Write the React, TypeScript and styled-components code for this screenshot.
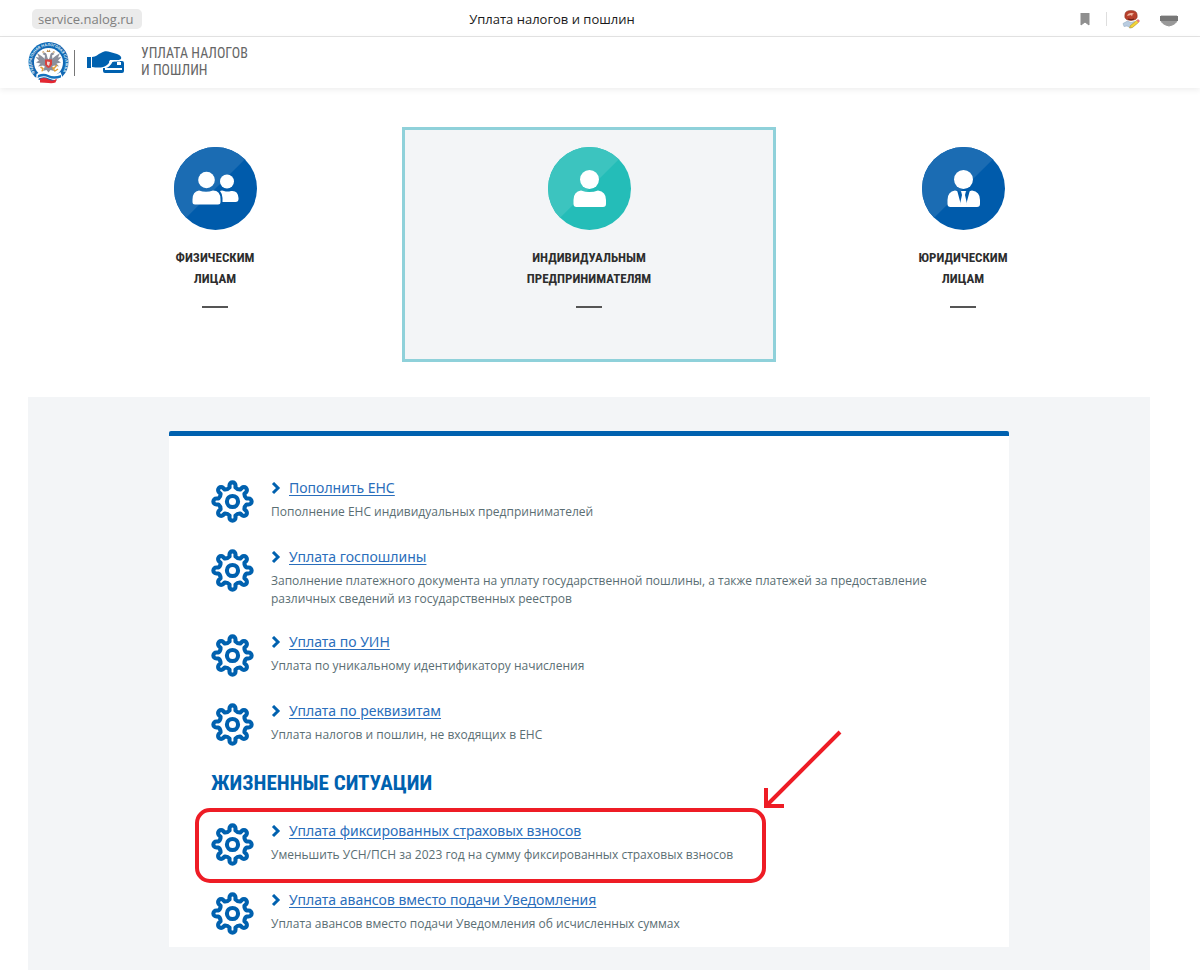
import React from 'react';
import styled, { createGlobalStyle } from 'styled-components';

const BLUE = '#0061af';
const CONDENSED = '"Roboto Condensed", "Open Sans Condensed", sans-serif';

const GlobalStyle = createGlobalStyle`
  *, *::before, *::after { box-sizing: border-box; }
  body {
    margin: 0;
    background: #fff;
    color: #333;
    font-family: "Open Sans", "Noto Sans", sans-serif;
    font-size: 12px;
    line-height: 18px;
  }
  h1, h2, p, ul { margin: 0; padding: 0; }
  ul { list-style: none; }
  svg { display: block; flex: none; }
`;

const BrowserBar = styled.div`
  display: grid;
  grid-template-columns: 1fr auto 1fr;
  align-items: center;
  height: 37px;
  padding: 2px 22px 0 32px;
  border-bottom: 1px solid #e4e4e4;
  font-size: 13px;
`;

const Address = styled.div`
  justify-self: start;
  padding: 0 8px 0 6px;
  border-radius: 5px;
  background: #ebebeb;
  color: #808080;
  line-height: 20px;
`;

const PageTitle = styled.div`
  padding-right: 106px;
  color: #1a1a1a;
`;

const BarTools = styled.div`
  display: flex;
  justify-content: flex-end;
  align-items: center;
`;

const ToolButton = styled.button<{ $gap?: number }>`
  margin: 0 0 0 ${p => p.$gap ?? 0}px;
  padding: 0;
  border: 0;
  background: none;
  cursor: pointer;
`;

const ToolDivider = styled.span`
  width: 1px;
  height: 14px;
  margin: 0 0 0 16px;
  background: #dedede;
`;

const SiteHeader = styled.header`
  display: flex;
  align-items: center;
  height: 51px;
  padding: 0 28px;
  box-shadow: 0 2px 6px rgba(0, 0, 0, 0.07);
`;

const HeaderDivider = styled.span`
  width: 1px;
  height: 26px;
  margin: 0 12px 0 5px;
  background: #777;
`;

const SiteName = styled.h1`
  margin-left: 16px;
  padding-bottom: 2px;
  color: #666;
  font: 400 14px/17px ${CONDENSED};
  text-transform: uppercase;
`;

const Main = styled.main`
  padding: 39px 50px 0 28px;
`;

const Audiences = styled.nav`
  display: grid;
  grid-template-columns: repeat(3, 1fr);
  margin-bottom: 35px;
`;

const AudienceTab = styled.a<{ $active?: boolean }>`
  display: flex;
  flex-direction: column;
  align-items: center;
  min-height: 235px;
  padding: 17px;
  border: 3px solid ${p => (p.$active ? '#8fd1da' : 'transparent')};
  background: ${p => (p.$active ? '#f3f5f7' : 'transparent')};
  color: #2d2d2d;
  font: 700 13px/21px ${CONDENSED};
  text-align: center;
  text-decoration: none;
  text-transform: uppercase;
`;

const AudienceName = styled.span`
  margin: 17px 0;
`;

const Dash = styled.span`
  width: 26px;
  height: 2px;
  background: #555;
`;

const Backdrop = styled.section`
  padding: 34px 141px 24px;
  background: #f3f5f7;
`;

const Card = styled.div`
  padding: 41px 42px 12px;
  border-top: 5px solid ${BLUE};
  border-radius: 2px 2px 0 0;
  background: #fff;
`;

const ServiceList = styled.ul`
  display: flex;
  flex-direction: column;
  gap: 23px;
`;

const ServiceItem = styled.li`
  position: relative;
  display: flex;
  gap: 17px;
`;

const GearBox = styled.div`
  padding-top: 3px;
`;

const ServiceLink = styled.a`
  display: flex;
  align-items: center;
  gap: 8px;
  margin-bottom: 4px;
  color: #2a6ebb;
  font: 400 14px/22px "Noto Sans", "Open Sans", sans-serif;
  text-decoration: none;

  span { text-decoration: underline; text-underline-offset: 2px; }
`;

const Description = styled.p`
  max-width: 680px;
  color: #5a6e73;
`;

const SectionTitle = styled.h2`
  margin: 23px 0;
  color: ${BLUE};
  font: 700 21px/28px ${CONDENSED};
  text-transform: uppercase;
`;

const Highlight = styled.div`
  position: absolute;
  top: -12px;
  left: -16px;
  width: 571px;
  height: 75px;
  border: 4px solid #ee1c25;
  border-radius: 15px;
  pointer-events: none;
`;

const Pointer = styled.svg`
  position: absolute;
  top: -92px;
  left: 549px;
  pointer-events: none;
`;

const Emblem = () => (
  <svg width="41" height="42" viewBox="0 0 82 84" aria-label="ФНС России" role="img">
    <defs>
      <path id="ring" d="M16 64A33.500 33.500 0 1 1 66 64" />
    </defs>
    <circle cx="41" cy="40" r="40" fill="#1268b3" />
    <text fill="#d9ebf8" fontSize="8" fontWeight="700" fontFamily="Roboto, sans-serif">
      <textPath href="#ring" startOffset="3">ФЕДЕРАЛЬНАЯ НАЛОГОВАЯ СЛУЖБА</textPath>
    </text>
    <circle cx="41" cy="41" r="29" fill="#fff" />
    <g fill="#8b8f9b">
      <path d="M39 52 30 47 20 49 25 43 16 41 22 37 15 30 22 31 18 22 27 28 33 33 36 38z" />
      <path d="M43 52 52 47 62 49 57 43 66 41 60 37 67 30 60 31 64 22 55 28 49 33 46 38z" />
      <path d="M29 24q5-5 8 0l2 8 2 3 2-3 2-8q3-5 8 0l-5 3 1 7-4 8H37l-4-8 1-7z" />
      <path d="M34 48h14l4 10-7-2-4 5-4-5-7 2z" />
    </g>
    <path d="M37 20l2-5 2 3 2-3 2 5zM28 21l2-3 4 3zM48 21l4-3 2 3z" fill="#b98b4d" />
    <path d="M34 35h14v10q-2 5-7 7-5-2-7-7z" fill="#d8413d" />
    <path d="M38 39l6 1-2 8-4-3z" fill="#f0d7d2" />
    <path d="M25 50l5 3-2 6M50 55l8-9M54 58l6-4M49 50l5 9" stroke="#e0a13a" strokeWidth="3" fill="none" />
    <path d="M17 64q11-9 24-2t24-2l5 13q-14 7-28 0t-26 4z" fill="#fff" />
    <path d="M20 66q11-5 21 0t25 0v5q-14 5-25 0t-22 1z" fill="#1672bd" />
    <path d="M24 74q8-4 17 1t17-2l-3 8q-6 2-14 1t-17-1z" fill="#e32832" />
  </svg>
);

const HandCard = () => (
  <svg width="38" height="24" viewBox="0 0 38 24" fill={BLUE} aria-hidden="true">
    <path d="M0 6h4v11H0z" />
    <path d="M5 6c4 0 6-3 9-4 3-2 6-2 9-1l7 2c3 1 5 3 4 5-1 1-3 1-5 1h-6c-1 1 0 3-3 5-4 3-8 3-15 2z" />
    <path fillRule="evenodd" d="M26 10h9q2 0 2 2v8q0 2-2 2H18q-2 0-2-2v-3h3q4-1 7-7zM18 17v2h17v-2zM30 11v3h4v-3z" />
    <path d="M22 11c4-1 8-1 11-1" stroke="#fff" fill="none" />
  </svg>
);

const Bookmark = () => (
  <svg width="10" height="13" viewBox="0 0 10 13"><path d="M1 0h8v12L5 9l-4 3z" fill="#8f8f8f" stroke="#8f8f8f" strokeLinejoin="round" /></svg>
);

const Mascot = () => (
  <svg width="18" height="19" viewBox="0 0 36 38">
    <path d="M2 27l9-5 7 3 7-2 2 6-9 7-8-4-6 1z" fill="#b9cce0" stroke="#8da5bd" />
    <path d="M6 8q1-7 12-7t12 7q2 8-3 11-9 4-18 0-5-3-3-11z" fill="#b8402c" stroke="#81301f" />
    <path d="M12 8q6-3 12-1l-3 2-1 4-2-3-8 2z" fill="#f0b6a0" />
    <path d="M12 18q6 3 12 0" stroke="#641c12" strokeWidth="2" fill="none" />
    <path d="M17 31l12-10 4 4-12 10-6 1z" fill="#f4d536" stroke="#a98920" />
    <path d="M29 21l3-3 4 4-3 3z" fill="#e97a78" />
  </svg>
);

const Shield = () => (
  <svg width="18" height="16" viewBox="0 0 18 16">
    <path d="M1 5h16v4q0 4-8 6-8-2-8-6z" fill="#999" stroke="#999" strokeLinejoin="round" />
    <path d="M0 5h18v5H0z" fill="#777" />
  </svg>
);

const Badge = ({ base, tint, children }: { base: string; tint: string; children: React.ReactNode }) => (
  <svg width="83" height="83" viewBox="0 0 83 83" aria-hidden="true">
    <circle cx="41.500" cy="41.500" r="41.500" fill={base} />
    <path d="M70.845 12.155A41.500 41.500 0 0 0 12.155 70.845z" fill={tint} />
    <g fill="#fff">{children}</g>
  </svg>
);

const People = () => (
  <Badge base="#005bab" tint="#1b6cb3">
    <circle cx="53" cy="34.500" r="7" />
    <path d="M46 44q2-1 4 0 3.500 1 7 0 7-1 7.500 7v1q0 3-3 3H48.500V51q0-4-2.500-7z" />
    <circle cx="32.500" cy="33" r="8.300" />
    <path d="M25 43.500q7 2.500 14 0 7.500 0 7.500 9V55q0 2.500-2.500 2.500H21q-2.500 0-2.500-2.500v-2.500q0-8 6.500-9z" />
  </Badge>
);

const Torso = () => (
  <>
    <circle cx="41.500" cy="32.500" r="9.500" />
    <path d="M33 43.500q8.500 3 17 0 8 1 8 9.500V57q0 3-3 3H28.500q-3 0-3-3v-4q0-8.500 7.500-9.500z" />
  </>
);

const Person = () => <Badge base="#24bdb8" tint="#3cc4bf"><Torso /></Badge>;

const Businessman = () => (
  <Badge base="#005bab" tint="#1b6cb3">
    <Torso />
    <path d="M35 43q3 2 6.500 2t6.500-2l-4 15h-5z" fill="#005bab" />
    <path d="M39 44h5l-1 4 2 9-2 3h-3l-2-3 2-9z" />
  </Badge>
);

const gearPath = (() => {
  const pts: string[] = [];
  const at = (r: number, deg: number) => {
    const a = (deg * Math.PI) / 180;
    return `${(22 + r * Math.sin(a)).toFixed(2)} ${(22 - r * Math.cos(a)).toFixed(2)}`;
  };
  for (let i = 0; i < 8; i++) {
    const c = i * 45;
    pts.push(`${i ? 'L' : 'M'}${at(14.6, c - 12)}`);
    pts.push(`L${at(16.8, c - 10.5)}A3.05 3.05 0 0 1 ${at(16.8, c + 10.5)}L${at(14.6, c + 12)}`);
    pts.push(`Q${at(13, c + 22.5)} ${at(14.6, c + 33)}`);
  }
  return pts.join('') + 'Z';
})();

const Gear = () => (
  <svg width="43" height="43" viewBox="0 0 44 44" fill="none" stroke={BLUE} strokeWidth="4.200" strokeLinejoin="round" aria-hidden="true">
    <path d={gearPath} />
    <circle cx="22" cy="22" r="5.700" />
  </svg>
);

const Chevron = () => (
  <svg width="10" height="13" viewBox="0 0 10 13" fill="none" stroke={BLUE} strokeWidth="3" aria-hidden="true">
    <path d="M2 1l5 5-5 5" />
  </svg>
);

type Service = { title: string; text: string; marked?: boolean };

const services: Service[] = [
  { title: 'Пополнить ЕНС', text: 'Пополнение ЕНС индивидуальных предпринимателей' },
  {
    title: 'Уплата госпошлины',
    text: 'Заполнение платежного документа на уплату государственной пошлины, а также платежей за предоставление различных сведений из государственных реестров',
  },
  { title: 'Уплата по УИН', text: 'Уплата по уникальному идентификатору начисления' },
  { title: 'Уплата по реквизитам', text: 'Уплата налогов и пошлин, не входящих в ЕНС' },
];

const situations: Service[] = [
  {
    title: 'Уплата фиксированных страховых взносов',
    text: 'Уменьшить УСН/ПСН за 2023 год на сумму фиксированных страховых взносов',
    marked: true,
  },
  {
    title: 'Уплата авансов вместо подачи Уведомления',
    text: 'Уплата авансов вместо подачи Уведомления об исчисленных суммах',
  },
];

const Services = ({ items }: { items: Service[] }) => (
  <ServiceList>
    {items.map(({ title, text, marked }) => (
      <ServiceItem key={title}>
        <GearBox><Gear /></GearBox>
        <div>
          <ServiceLink href="#"><Chevron /><span>{title}</span></ServiceLink>
          <Description>{text}</Description>
        </div>
        {marked && (
          <>
            <Highlight />
            <Pointer width="84" height="82" viewBox="0 0 84 82" fill="none" stroke="#ee1c25" strokeWidth="4" aria-hidden="true">
              <path d="M80 4 7 77M6 60v18h18" />
            </Pointer>
          </>
        )}
      </ServiceItem>
    ))}
  </ServiceList>
);

export default function App() {
  return (
    <>
      <GlobalStyle />
      <BrowserBar>
        <Address>service.nalog.ru</Address>
        <PageTitle>Уплата налогов и пошлин</PageTitle>
        <BarTools>
          <ToolButton aria-label="Закладка"><Bookmark /></ToolButton>
          <ToolDivider />
          <ToolButton $gap={15} aria-label="Расширение"><Mascot /></ToolButton>
          <ToolButton $gap={20} aria-label="Защита"><Shield /></ToolButton>
        </BarTools>
      </BrowserBar>
      <SiteHeader>
        <Emblem />
        <HeaderDivider />
        <HandCard />
        <SiteName>Уплата налогов<br />и пошлин</SiteName>
      </SiteHeader>
      <Main>
        <Audiences>
          <AudienceTab href="#">
            <People />
            <AudienceName>Физическим<br />лицам</AudienceName>
            <Dash />
          </AudienceTab>
          <AudienceTab href="#" $active aria-current="page">
            <Person />
            <AudienceName>Индивидуальным<br />предпринимателям</AudienceName>
            <Dash />
          </AudienceTab>
          <AudienceTab href="#">
            <Businessman />
            <AudienceName>Юридическим<br />лицам</AudienceName>
            <Dash />
          </AudienceTab>
        </Audiences>
        <Backdrop>
          <Card>
            <Services items={services} />
            <SectionTitle>Жизненные ситуации</SectionTitle>
            <Services items={situations} />
          </Card>
        </Backdrop>
      </Main>
    </>
  );
}
